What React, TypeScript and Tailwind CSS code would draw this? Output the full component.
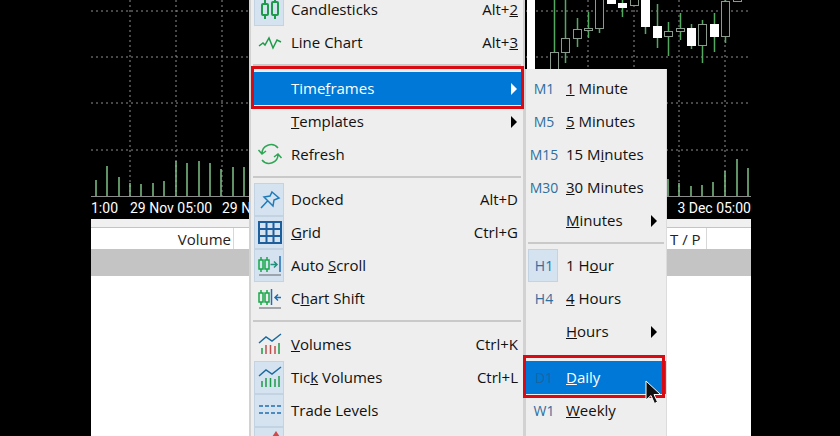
import { ReactNode } from "react";

const candles: { x: number; wick: [number, number]; body: [number, number]; solid?: boolean }[] = [
  { x: 554, wick: [0, 69], body: [52, 69] },
  { x: 565, wick: [0, 63], body: [38, 52] },
  { x: 577, wick: [18, 47], body: [29, 38] },
  { x: 588, wick: [12, 38], body: [28, 30] },
  { x: 599, wick: [0, 33], body: [-2, 28] },
  { x: 611, wick: [0, 4], body: [-2, 3], solid: true },
  { x: 622, wick: [0, 17], body: [3, 7], solid: true },
  { x: 634, wick: [0, 6], body: [-2, 5] },
  { x: 645, wick: [0, 34], body: [-2, 26], solid: true },
  { x: 657, wick: [4, 48], body: [26, 37], solid: true },
  { x: 668, wick: [22, 56], body: [31, 36] },
  { x: 680, wick: [13, 40], body: [28, 31] },
  { x: 691, wick: [24, 49], body: [28, 45], solid: true },
  { x: 702, wick: [20, 63], body: [24, 45] },
  { x: 714, wick: [13, 52], body: [24, 36], solid: true },
  { x: 725, wick: [0, 43], body: [1, 36] },
  { x: 737, wick: [0, 2], body: [-2, 1] },
];

const volumes = [
  [96, 180], [107, 166], [119, 177], [130, 183], [141, 184], [153, 183], [164, 181], [176, 161],
  [187, 163], [199, 161], [210, 163], [221, 169], [233, 167], [244, 167],
  [668, 179], [679, 183], [691, 186], [702, 185], [713, 182], [725, 171], [737, 159], [748, 168],
];

function Chart() {
  return (
    <svg viewBox="91 0 660 219" className="block h-[219px] w-[660px]">
      {[11, 57, 103, 150].map((y) => (
        <line key={y} x1={91} x2={751} y1={y} y2={y} stroke="#8f8f8f" strokeDasharray="2 3" />
      ))}
      {[130, 176, 222, 588, 634, 679, 725].map((x) => (
        <line key={x} x1={x} x2={x} y1={0} y2={200} stroke="#8f8f8f" strokeDasharray="2 3" />
      ))}
      {candles.map((c) => (
        <g key={c.x}>
          <line x1={c.x + 0.5} x2={c.x + 0.5} y1={c.wick[0]} y2={c.wick[1]} stroke="#55a860" strokeWidth={1.5} />
          <rect
            x={c.x - 3.5}
            y={c.body[0] + 0.5}
            width={8}
            height={c.body[1] - c.body[0]}
            fill={c.solid ? "#ffffff" : "#000000"}
            stroke={c.solid ? "#ffffff" : "#8a9a8c"}
          />
        </g>
      ))}
      <line x1={91} x2={751} y1={196.5} y2={196.5} stroke="#8c8c8c" />
      {volumes.map(([x, top]) => (
        <line key={x} x1={x} x2={x} y1={top} y2={196} stroke="#7fc487" strokeWidth={1.5} />
      ))}
    </svg>
  );
}

const iconClass = "h-[33px] w-[30px] shrink-0";

function CandlesIcon() {
  return (
    <svg viewBox="0 0 30 33" className={iconClass} fill="none" stroke="#1f9a4a" strokeWidth="2">
      <path d="M11 7v4M11 22v4M21 3v6M21 22v4" />
      <rect x="8" y="11" width="6" height="11" rx="1" />
      <rect x="18" y="9" width="6" height="13" rx="1" />
    </svg>
  );
}

function LineChartIcon() {
  return (
    <svg viewBox="0 0 30 33" className={iconClass} fill="none" stroke="#1f9a4a" strokeWidth="1.5">
      <path d="M5 20l4-3 2 2 4-7 4 10 4-8 4 2" />
    </svg>
  );
}

function RefreshIcon() {
  return (
    <svg viewBox="0 0 30 33" className={iconClass} fill="none" stroke="#2da653" strokeWidth="1.5">
      <path d="M24 10a9 9 0 0 0-16 6M4.500 12l3.500 4 4-3" />
      <path d="M8 22a9 9 0 0 0 16-6M27.500 20l-3.500-4-4 3" />
    </svg>
  );
}

function PinIcon() {
  return (
    <svg viewBox="0 0 30 33" className={iconClass} fill="none" stroke="#1f7ab8" strokeWidth="1.5">
      <path d="M7 25l6.500-7M18 9l7 6-5 2-1 6-9-9 6-1z" />
    </svg>
  );
}

function GridIcon() {
  return (
    <svg viewBox="0 0 30 33" className={iconClass} fill="none" stroke="#1c5f9c" strokeWidth="2">
      <path d="M5 6h22v21H5zM5 13h22M5 20h22M12.500 6v21M19.500 6v21" />
    </svg>
  );
}

function ScrollIcon() {
  return (
    <svg viewBox="0 0 30 33" className={iconClass} fill="none" strokeWidth="1.5">
      <path d="M7 8v15M13 8v15" stroke="#18a84a" />
      <rect x="5" y="11" width="4" height="9" stroke="#18a84a" fill="#d5e3f0" />
      <rect x="11" y="11" width="4" height="9" stroke="#18a84a" fill="#d5e3f0" />
      <path d="M16.500 15.500h6M20 12.500l3 3-3 3" stroke="#1f8f7a" />
      <path d="M26 7v16" stroke="#1f6fb0" />
      <path d="M5 26h22" stroke="#8a8f96" />
    </svg>
  );
}

function ShiftIcon() {
  return (
    <svg viewBox="0 0 30 33" className={iconClass} fill="none" strokeWidth="1.5">
      <path d="M7 8v15M13 8v15" stroke="#18a84a" />
      <rect x="5" y="11" width="4" height="9" stroke="#18a84a" fill="#eeeeee" />
      <rect x="11" y="11" width="4" height="9" stroke="#18a84a" fill="#eeeeee" />
      <path d="M17.500 7v16" stroke="#1f6fb0" />
      <path d="M27 15.500h-6M24 12.500l-3 3 3 3" stroke="#1f6fb0" />
      <path d="M5 26h22" stroke="#8a8f96" />
    </svg>
  );
}

function VolumesIcon({ allGreen }: { allGreen?: boolean }) {
  const red = allGreen ? "#1f9a4a" : "#c0504d";
  return (
    <svg viewBox="0 0 30 33" className={iconClass} fill="none" strokeWidth="1.5">
      <path d="M5 15l7-6 6 4 9-7" stroke="#1c6a9c" />
      <path d="M8 26v-6M25 26V15" stroke="#1f9a4a" />
      <path d="M12 26v-9M16.500 26v-9M21 26v-8" stroke={red} />
    </svg>
  );
}

function LevelsIcon() {
  return (
    <svg viewBox="0 0 30 33" className={iconClass} fill="none" stroke="#1f6fb0" strokeWidth="1.5" strokeDasharray="4 2">
      <path d="M5 12h22M5 19h22" />
    </svg>
  );
}

function AlertIcon() {
  return (
    <svg viewBox="0 0 30 33" className={iconClass} fill="#d04a4a">
      <path d="M22 4l4 6h-8z" />
    </svg>
  );
}

function IconCell({ active, children }: { active?: boolean; children?: ReactNode }) {
  return (
    <div
      className={`flex h-[33px] w-[30px] shrink-0 items-center justify-center ${
        active ? "border border-[#c3d3e2] bg-[#d5e3f0]" : ""
      }`}
    >
      {children}
    </div>
  );
}

function Arrow({ light }: { light?: boolean }) {
  return (
    <div
      className={`mr-[1px] h-0 w-0 border-y-[6px] border-l-[6px] border-y-transparent ${
        light ? "border-l-white" : "border-l-black"
      }`}
    />
  );
}

function Row({
  icon,
  active,
  label,
  shortcut,
  arrow,
}: {
  icon?: ReactNode;
  active?: boolean;
  label: ReactNode;
  shortcut?: ReactNode;
  arrow?: boolean;
}) {
  return (
    <div className="flex h-[33px] items-center pl-[3px] pr-[5px] text-[#111]">
      <IconCell active={active}>{icon}</IconCell>
      <span className="ml-[7px] flex-1 pb-[2px]">{label}</span>
      {shortcut && <span className="pb-[2px]">{shortcut}</span>}
      {arrow && <Arrow />}
    </div>
  );
}

function SubRow({
  code,
  active,
  label,
  arrow,
}: {
  code?: string;
  active?: boolean;
  label: ReactNode;
  arrow?: boolean;
}) {
  return (
    <div className="flex h-[33px] items-center pl-[2px] pr-[8px] text-[#111]">
      <div
        className={`flex h-[33px] w-[30px] shrink-0 items-center justify-center pl-[2px] text-[14px] text-[#2f6f9f] ${
          active ? "border border-[#c3d3e2] bg-[#d5e3f0]" : ""
        }`}
      >
        {code}
      </div>
      <span className="ml-[8px] flex-1 pb-[2px]">{label}</span>
      {arrow && <Arrow />}
    </div>
  );
}

function Separator() {
  return <div className="mx-[2px] mb-[6px] mt-[5px] h-[2px] bg-[#c9c9c9]" />;
}

export default function App() {
  return (
    <div
      className="relative h-[436px] w-[840px] overflow-hidden bg-black text-[15px] leading-[18px]"
      style={{ fontFamily: '"Open Sans", "Noto Sans", sans-serif' }}
    >
      {/* terminal window behind the menus */}
      <div className="ml-[91px] flex h-[436px] w-[660px] flex-col bg-white">
        <div className="relative h-[219px] whitespace-nowrap bg-black font-[Roboto] text-[14px] leading-[20px] text-white">
          <Chart />
          <div className="absolute left-0 top-[198px]">1:00</div>
          <div className="absolute left-[39px] top-[198px]">29 Nov 05:00</div>
          <div className="absolute left-[131px] top-[198px]">29 N</div>
          <div className="absolute right-0 top-[198px]">3 Dec 05:00</div>
        </div>
        <div className="h-[9px] border-b border-[#c4c4c4] bg-[#f0f0f0]" />
        <div className="flex h-[21px] items-center text-[#222]">
          <div className="flex h-full w-[143px] items-center justify-end border-r border-[#d8d8d8] pr-[2px]">Volume</div>
          <div className="w-[435px]" />
          <div className="flex h-full w-[38px] items-center border-r border-[#d8d8d8] pl-[1px]">T / P</div>
        </div>
        <div className="h-[27px] bg-[#c4c4c4]" />
      </div>

      {/* white strip between the two menus */}
      <div className="absolute left-[527px] top-0 h-[69px] w-[8px] bg-white" />

      {/* main context menu */}
      <div className="absolute left-[249px] top-[-7px] w-[276px] border-x-2 border-x-[#d2d2d2] bg-[#eeeeee]">
        <Row
          active
          icon={<CandlesIcon />}
          label="Candlesticks"
          shortcut={<>Alt+<u>2</u></>}
        />
        <Row
          icon={<LineChartIcon />}
          label="Line Chart"
          shortcut={<>Alt+<u>3</u></>}
        />
        <Separator />
        <div className="flex h-[33px] items-center bg-[#0078d7] pl-[40px] pr-[5px] text-white">
          <span className="flex-1 pb-[2px]">Time<u>f</u>rames</span>
          <Arrow light />
        </div>
        <Row label={<><u>T</u>emplates</>} arrow />
        <Row icon={<RefreshIcon />} label="Refresh" />
        <div className="mx-[2px] my-[5px] h-[2px] bg-[#c9c9c9]" />
        <Row active icon={<PinIcon />} label="Docked" shortcut="Alt+D" />
        <Row active icon={<GridIcon />} label={<><u>G</u>rid</>} shortcut="Ctrl+G" />
        <Row active icon={<ScrollIcon />} label={<>Auto <u>S</u>croll</>} />
        <Row icon={<ShiftIcon />} label={<>C<u>h</u>art Shift</>} />
        <Separator />
        <Row icon={<VolumesIcon />} label={<><u>V</u>olumes</>} shortcut="Ctrl+K" />
        <Row active icon={<VolumesIcon allGreen />} label={<>Tic<u>k</u> Volumes</>} shortcut="Ctrl+L" />
        <Row active icon={<LevelsIcon />} label="Trade Levels" />
        <Row active icon={<AlertIcon />} label="" />
      </div>

      {/* timeframes submenu */}
      <div className="absolute left-[524px] top-[69px] h-[380px] w-[142px] border-l-2 border-l-[#d2d2d2] bg-[#eeeeee] pt-[3px] shadow-[1px_0_0_#dcdcdc]">
        <SubRow code="M1" label={<><u>1</u> Minute</>} />
        <SubRow code="M5" label={<><u>5</u> Minutes</>} />
        <SubRow code="M15" label={<>15 M<u>i</u>nutes</>} />
        <SubRow code="M30" label={<><u>3</u>0 Minutes</>} />
        <SubRow label={<><u>M</u>inutes</>} arrow />
        <div className="mx-[2px] my-[5px] h-[2px] bg-[#c9c9c9]" />
        <SubRow code="H1" active label={<>1 H<u>o</u>ur</>} />
        <SubRow code="H4" label={<><u>4</u> Hours</>} />
        <SubRow label={<><u>H</u>ours</>} arrow />
        <div className="h-[13px]" />
        <div className="flex h-[33px] items-center bg-[#0078d7] pl-[2px] text-white">
          <div className="flex w-[30px] justify-center pl-[2px] text-[14px] text-[#1f62a0]">D1</div>
          <span className="ml-[8px] pb-[2px]"><u>D</u>aily</span>
        </div>
        <SubRow code="W1" label={<><u>W</u>eekly</>} />
      </div>

      {/* red callouts */}
      <div className="absolute left-[251px] top-[66px] h-[43px] w-[273px] border-[3px] border-[#d90a12]" />
      <div className="absolute left-[523px] top-[355px] h-[43px] w-[142px] border-[3px] border-[#d90a12]" />

      {/* mouse pointer */}
      <svg viewBox="0 0 18 27" className="absolute left-[644px] top-[380px] h-[27px] w-[18px]">
        <path d="M2 1v19l5-4.500 3.500 8 3-1.500-3.500-7.500h6.500z" fill="#111" stroke="#fff" strokeWidth="1" />
      </svg>
    </div>
  );
}
